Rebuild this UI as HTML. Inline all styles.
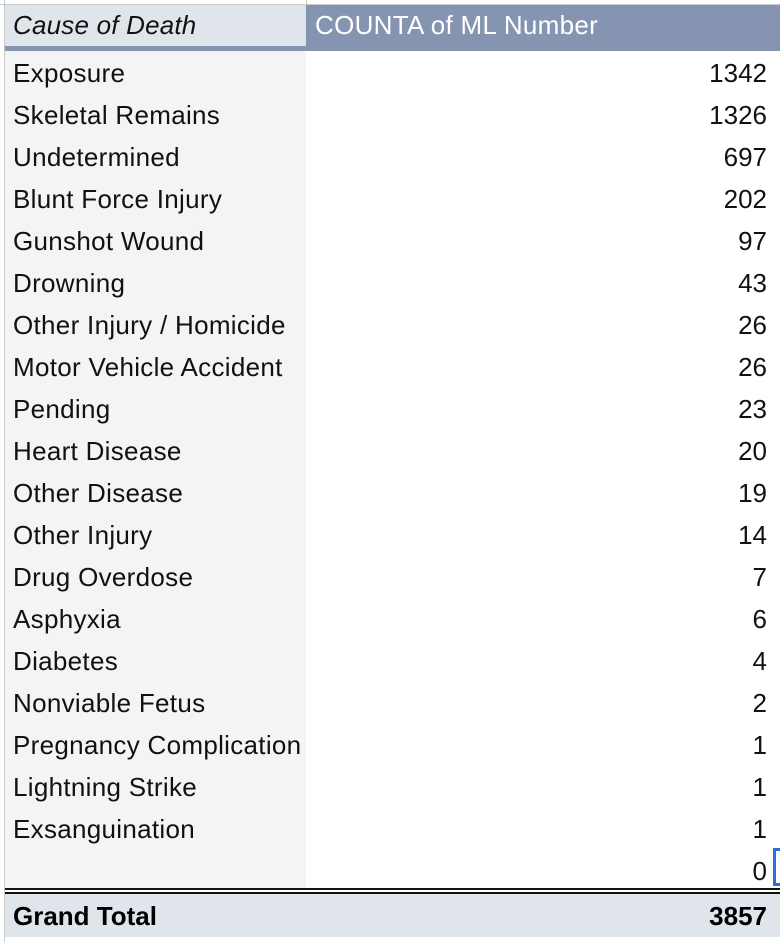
<!DOCTYPE html>
<html><head><style>
html,body{margin:0;padding:0;width:780px;height:942px;background:#fff;overflow:hidden;font-family:"Liberation Sans",Arial,sans-serif;}
.vl{position:absolute;left:4px;top:0;width:1px;height:942px;background:#c8c8c8;}
.top{position:absolute;left:0;top:4px;width:780px;height:1px;background:#c8c8c8;}
.tv{position:absolute;left:306px;top:0;width:1px;height:5px;background:#c8c8c8;}
.hl{position:absolute;left:5px;top:5px;width:301px;height:41px;background:#e0e4eb;font-style:italic;font-size:26px;line-height:40px;padding-left:8px;box-sizing:border-box;color:#111;letter-spacing:0.2px;}
.hb{position:absolute;left:5px;top:46px;width:301px;height:5px;background:#8594b1;}
.hr{position:absolute;left:306px;top:5px;width:474px;height:46px;background:#8594b1;color:#fff;font-size:26px;line-height:40px;padding-left:9px;box-sizing:border-box;letter-spacing:0.3px;}
.lc{position:absolute;left:5px;top:51px;width:301px;height:838px;background:#f3f4f6;}
.r{position:absolute;left:5px;width:762px;height:42px;font-size:26px;line-height:42px;color:#111;}
.r span{position:absolute;left:8px;letter-spacing:0.3px;}
.r b{position:absolute;right:0;font-weight:normal;}
.d1{position:absolute;left:5px;top:888px;width:775px;height:2px;background:#111;}
.d2{position:absolute;left:5px;top:892px;width:775px;height:2px;background:#111;}
.gt{position:absolute;left:5px;top:894px;width:775px;height:43px;background:#e0e4eb;font-weight:bold;font-size:26px;line-height:44px;}
.sel{position:absolute;left:773px;top:848px;width:7px;height:38px;border:3px solid #2a6fdb;border-right:none;box-sizing:border-box;}
</style></head><body>
<div class="top"></div><div class="tv"></div><div class="vl"></div>
<div class="hl">Cause of Death</div><div class="hb"></div>
<div class="hr">COUNTA of ML Number</div>
<div class="lc"></div>
<div class="r" style="top:52px"><span>Exposure</span><b>1342</b></div>
<div class="r" style="top:94px"><span>Skeletal Remains</span><b>1326</b></div>
<div class="r" style="top:136px"><span>Undetermined</span><b>697</b></div>
<div class="r" style="top:178px"><span>Blunt Force Injury</span><b>202</b></div>
<div class="r" style="top:220px"><span>Gunshot Wound</span><b>97</b></div>
<div class="r" style="top:262px"><span>Drowning</span><b>43</b></div>
<div class="r" style="top:304px"><span>Other Injury / Homicide</span><b>26</b></div>
<div class="r" style="top:346px"><span>Motor Vehicle Accident</span><b>26</b></div>
<div class="r" style="top:388px"><span>Pending</span><b>23</b></div>
<div class="r" style="top:430px"><span>Heart Disease</span><b>20</b></div>
<div class="r" style="top:472px"><span>Other Disease</span><b>19</b></div>
<div class="r" style="top:514px"><span>Other Injury</span><b>14</b></div>
<div class="r" style="top:556px"><span>Drug Overdose</span><b>7</b></div>
<div class="r" style="top:598px"><span>Asphyxia</span><b>6</b></div>
<div class="r" style="top:640px"><span>Diabetes</span><b>4</b></div>
<div class="r" style="top:682px"><span>Nonviable Fetus</span><b>2</b></div>
<div class="r" style="top:724px"><span>Pregnancy Complication</span><b>1</b></div>
<div class="r" style="top:766px"><span>Lightning Strike</span><b>1</b></div>
<div class="r" style="top:808px"><span>Exsanguination</span><b>1</b></div>
<div class="r" style="top:850px"><span></span><b>0</b></div>
<div class="sel"></div>
<div class="d1"></div><div class="d2"></div>
<div class="gt"><span style="position:absolute;left:8px">Grand Total</span><span style="position:absolute;right:13px">3857</span></div>
</body></html>
